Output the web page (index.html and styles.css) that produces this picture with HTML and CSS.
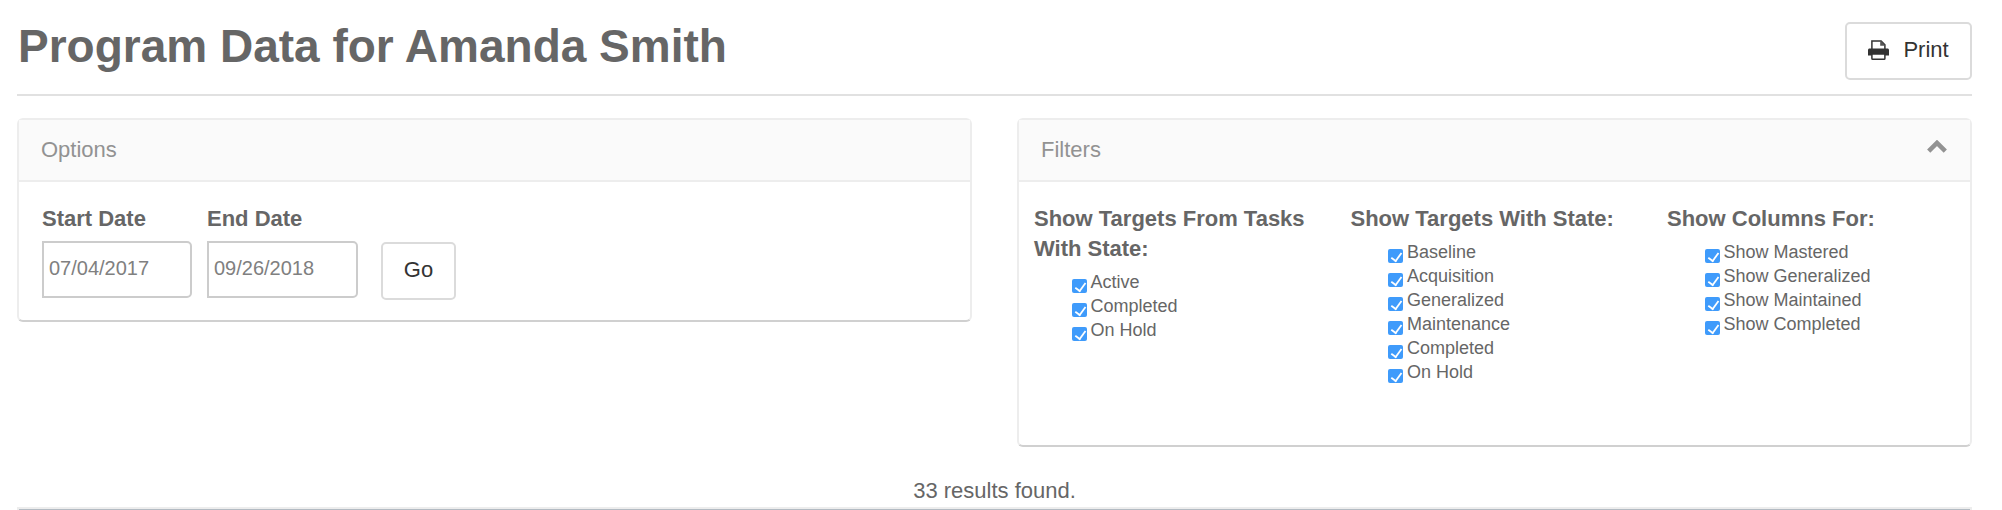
FILE: index.html
```html
<!DOCTYPE html>
<html lang="en">
<head>
    <meta charset="UTF-8">
    <title>Program Data for Amanda Smith</title>
    <meta name="viewport" content="width=device-width, initial-scale=1.0">
    <link rel="stylesheet" href="styles.css">
</head>
<body>
    <div class="container">
        <header class="page-header">
            <h1>Program Data for Amanda Smith</h1>
            <button class="btn print-btn" type="button">
                <svg class="print-icon" viewBox="0 0 21 20" aria-hidden="true">
                    <path d="M3.9 9V1h9.200l3.800 3.900V9" fill="#fff" stroke="#333" stroke-width="1.500"/>
                    <path d="M12.200 1v4.800h4.700V4.900L13.200 1z" fill="#555"/>
                    <path d="M1.500 8.500h18c.8 0 1.500.7 1.500 1.500V15.500H0V10c0-.8.7-1.500 1.500-1.500z" fill="#333"/>
                    <rect x="3.900" y="14" width="13" height="5.200" rx=".8" fill="#fff" stroke="#333" stroke-width="1.500"/>
                </svg>
                <span>Print</span>
            </button>
        </header>

        <div class="panels">
            <section class="card">
                <div class="card-header"><span>Options</span></div>
                <form class="options">
                    <div class="field">
                        <label for="startDate">Start Date</label>
                        <input type="text" id="startDate" value="07/04/2017">
                    </div>
                    <div class="field end-field">
                        <label for="endDate">End Date</label>
                        <input type="text" id="endDate" value="09/26/2018">
                    </div>
                    <button class="btn go-btn" type="button">Go</button>
                </form>
            </section>

            <section class="card">
                <div class="card-header">
                    <span>Filters</span>
                    <svg class="chevron" viewBox="0 0 20 13" aria-hidden="true">
                        <path d="M1.700 11.200L10 2.900l8.300 8.300" fill="none" stroke="#929292" stroke-width="4.500"/>
                    </svg>
                </div>
                <div class="filters">
                    <div class="filter-group">
                        <h2>Show Targets From Tasks With State:</h2>
                        <label><input type="checkbox" checked>Active</label>
                        <label><input type="checkbox" checked>Completed</label>
                        <label><input type="checkbox" checked>On Hold</label>
                    </div>
                    <div class="filter-group">
                        <h2>Show Targets With State:</h2>
                        <label><input type="checkbox" checked>Baseline</label>
                        <label><input type="checkbox" checked>Acquisition</label>
                        <label><input type="checkbox" checked>Generalized</label>
                        <label><input type="checkbox" checked>Maintenance</label>
                        <label><input type="checkbox" checked>Completed</label>
                        <label><input type="checkbox" checked>On Hold</label>
                    </div>
                    <div class="filter-group">
                        <h2>Show Columns For:</h2>
                        <label><input type="checkbox" checked>Show Mastered</label>
                        <label><input type="checkbox" checked>Show Generalized</label>
                        <label><input type="checkbox" checked>Show Maintained</label>
                        <label><input type="checkbox" checked>Show Completed</label>
                    </div>
                </div>
            </section>
        </div>

        <div class="results">33 results found.</div>
        <div class="results-table"></div>
    </div>
</body>
</html>
```
FILE: styles.css
```css
* {
    box-sizing: border-box;
}

body {
    margin: 0;
    background: #fff;
    color: #666;
    font-family: "Liberation Sans", Arial, sans-serif;
    font-size: 22px;
    line-height: 30px;
}

.container {
    height: 510px;
    padding: 0 30px 0 17px;
    display: flex;
    flex-direction: column;
    overflow: hidden;
}

.page-header {
    display: flex;
    flex-shrink: 0;
    justify-content: space-between;
    align-items: flex-start;
    height: 96px;
    padding-top: 22px;
    border-bottom: 2px solid #e1e1e1;
}

h1 {
    margin: 0 0 0 1px;
    font-size: 46px;
    line-height: 48px;
}

.btn {
    display: flex;
    align-items: center;
    justify-content: center;
    height: 58px;
    padding: 0 0 2px;
    border: 2px solid #dbdbdb;
    border-radius: 5px;
    background: #fff;
    color: #333;
    font: inherit;
}

.print-btn {
    width: 127px;
    gap: 14px;
}

.print-icon {
    width: 21px;
    height: 20px;
}

.panels {
    display: grid;
    flex-shrink: 0;
    grid-template-columns: repeat(2, minmax(0, 1fr));
    gap: 45px;
    align-items: start;
    margin-top: 22px;
}

.card {
    border: 2px solid #ededed;
    border-bottom-color: #d0d0d0;
    border-radius: 6px;
}

.card-header {
    display: flex;
    justify-content: space-between;
    height: 62px;
    padding: 15px 23px 0 22px;
    border-bottom: 2px solid #ededed;
    background: #fafafa;
    color: #929292;
}

.chevron {
    width: 20px;
    height: 13px;
    margin-top: 5px;
}

.options {
    display: flex;
    height: 138px;
    padding: 22px 23px 0;
}

.field {
    width: 150px;
    margin-right: 15px;
}

.end-field {
    width: 151px;
    margin-right: 23px;
}

.field label {
    display: block;
    height: 37px;
    font-weight: bold;
}

.field input {
    width: 100%;
    height: 57px;
    padding: 0 5px 2px;
    border: 2px solid #ccc;
    border-radius: 0 5px 5px 0;
    color: #808080;
    font: 20px "Liberation Sans", Arial, sans-serif;
}

.go-btn {
    width: 75px;
    margin-top: 38px;
}

.filters {
    display: grid;
    grid-template-columns: 316.5px 316.5px 1fr;
    height: 263px;
    padding: 22px 0 0 15px;
}

.filter-group h2 {
    max-width: 290px;
    margin: 0 0 6px;
    font-size: 22px;
    line-height: 30px;
}

.filter-group label {
    display: flex;
    align-items: center;
    height: 24px;
    padding-left: 37.5px;
    font-size: 18px;
    line-height: 24px;
}

.filter-group input {
    appearance: none;
    width: 15px;
    height: 14px;
    margin: 8px 4px 0 0;
    border-radius: 2px;
    background: #3f9bfb;
    position: relative;
}

/* tick */
.filter-group input::after {
    content: "";
    position: absolute;
    left: 5px;
    top: 1px;
    width: 5px;
    height: 10px;
    border: solid #fff;
    border-width: 0 2px 2px 0;
    transform: rotate(36deg) scale(.9);
}

.results {
    flex-shrink: 0;
    height: 60px;
    padding-top: 29px;
    text-align: center;
}

.results-table {
    flex: 1;
    border: 2px solid #ededed;
    border-bottom: 0;
    background: #b3bbc3;
}
```
